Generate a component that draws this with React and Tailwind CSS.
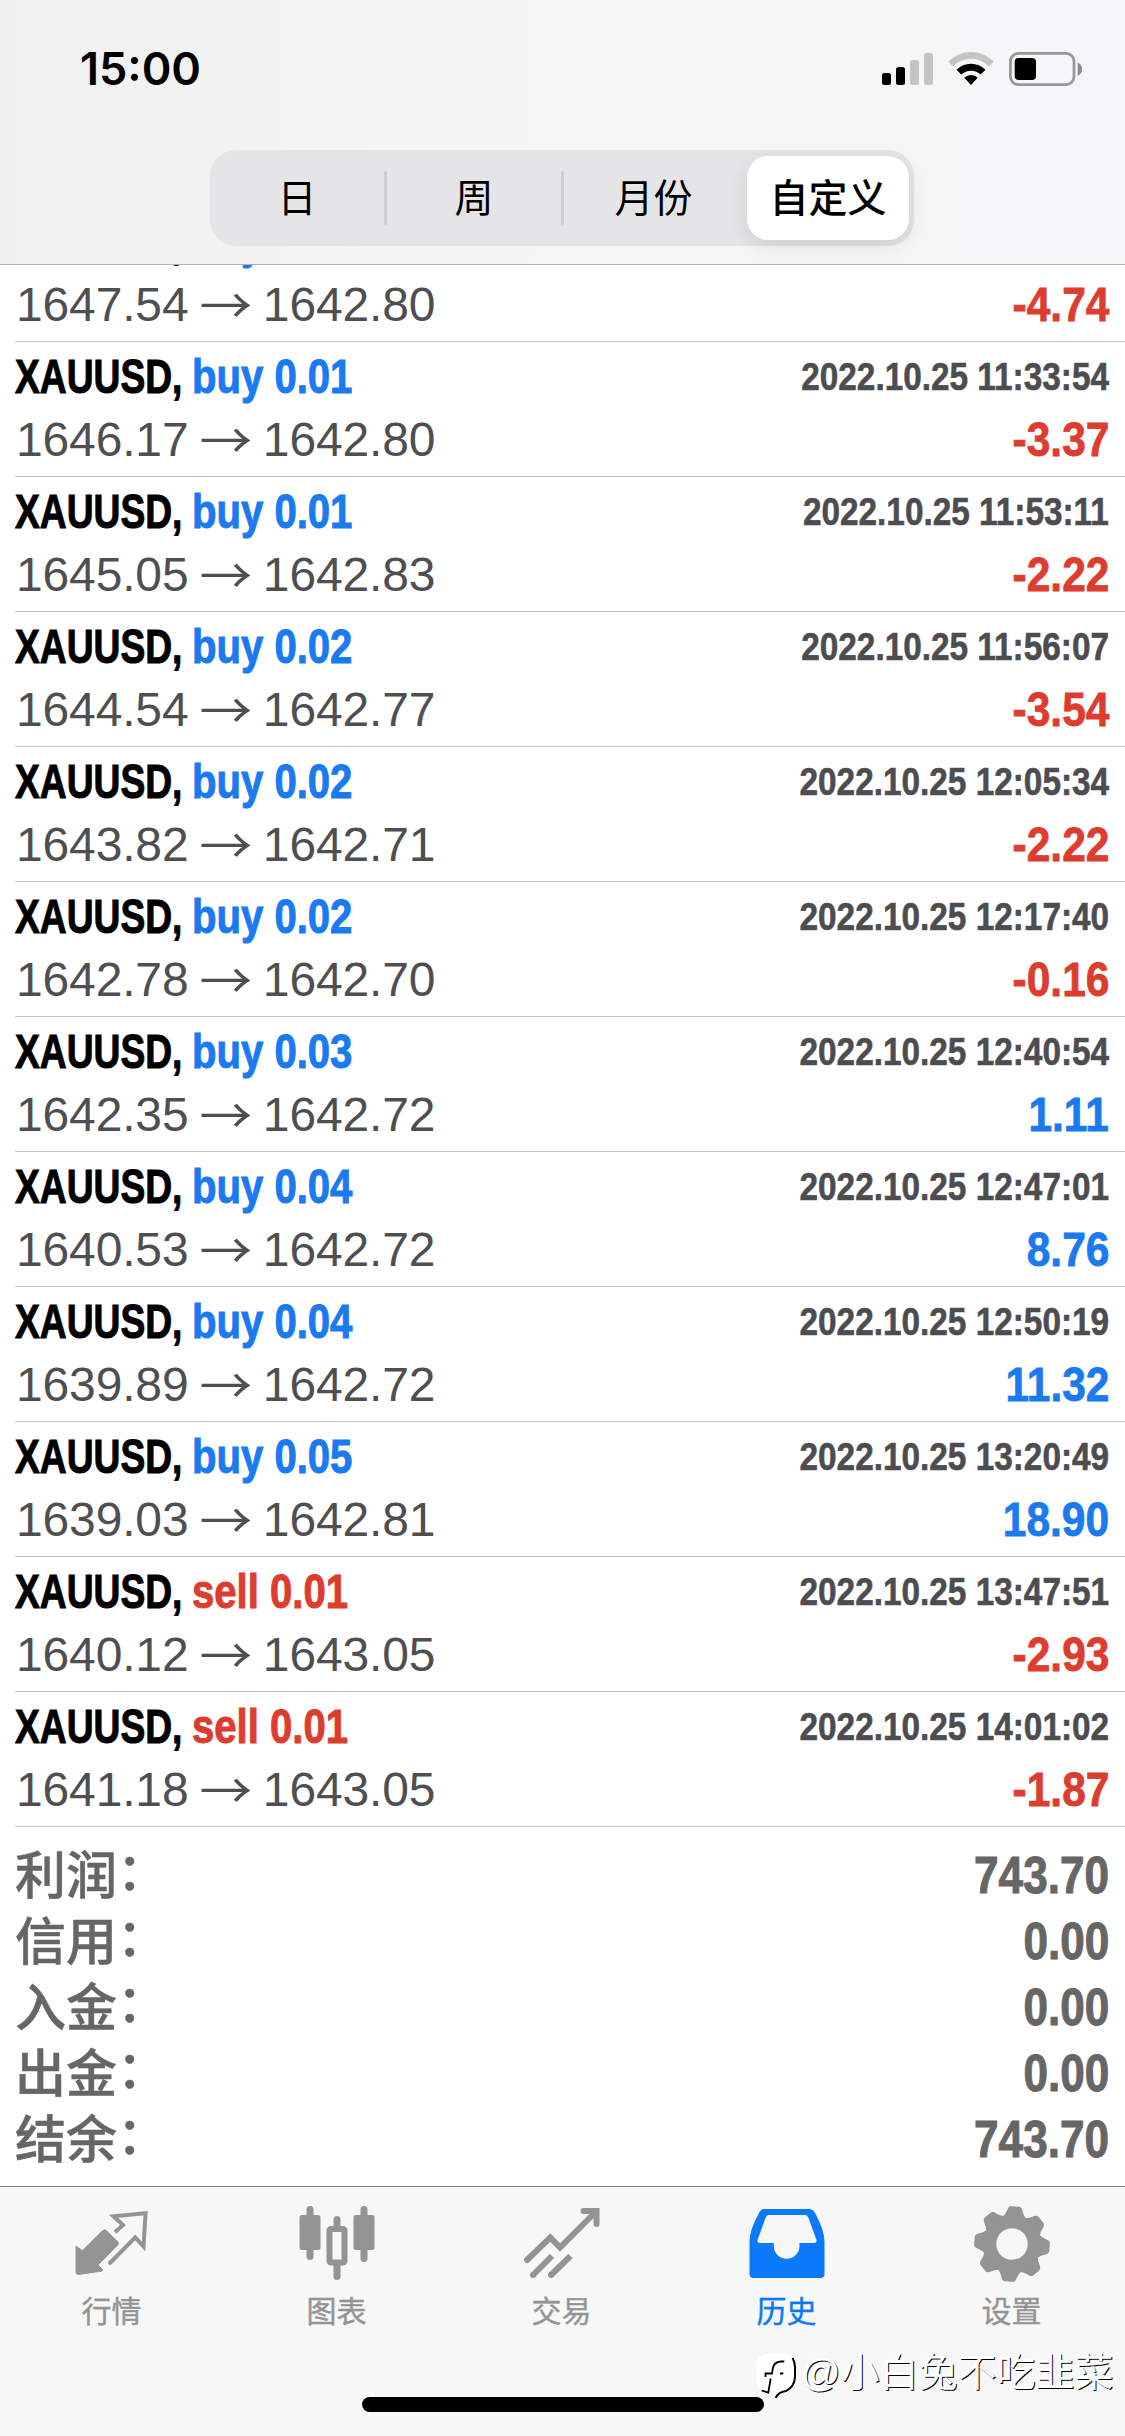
const deals = [
  { side: "buy", volume: "0.01", open: "1647.54", close: "1642.80", time: "2022.10.25 11:20:18", profit: "-4.74" },
  { side: "buy", volume: "0.01", open: "1646.17", close: "1642.80", time: "2022.10.25 11:33:54", profit: "-3.37" },
  { side: "buy", volume: "0.01", open: "1645.05", close: "1642.83", time: "2022.10.25 11:53:11", profit: "-2.22" },
  { side: "buy", volume: "0.02", open: "1644.54", close: "1642.77", time: "2022.10.25 11:56:07", profit: "-3.54" },
  { side: "buy", volume: "0.02", open: "1643.82", close: "1642.71", time: "2022.10.25 12:05:34", profit: "-2.22" },
  { side: "buy", volume: "0.02", open: "1642.78", close: "1642.70", time: "2022.10.25 12:17:40", profit: "-0.16" },
  { side: "buy", volume: "0.03", open: "1642.35", close: "1642.72", time: "2022.10.25 12:40:54", profit: "1.11" },
  { side: "buy", volume: "0.04", open: "1640.53", close: "1642.72", time: "2022.10.25 12:47:01", profit: "8.76" },
  { side: "buy", volume: "0.04", open: "1639.89", close: "1642.72", time: "2022.10.25 12:50:19", profit: "11.32" },
  { side: "buy", volume: "0.05", open: "1639.03", close: "1642.81", time: "2022.10.25 13:20:49", profit: "18.90" },
  { side: "sell", volume: "0.01", open: "1640.12", close: "1643.05", time: "2022.10.25 13:47:51", profit: "-2.93" },
  { side: "sell", volume: "0.01", open: "1641.18", close: "1643.05", time: "2022.10.25 14:01:02", profit: "-1.87" },
];

const totals = [
  { label: "利润", value: "743.70" },
  { label: "信用", value: "0.00" },
  { label: "入金", value: "0.00" },
  { label: "出金", value: "0.00" },
  { label: "结余", value: "743.70" },
];

function StatusIcons() {
  return (
    <svg width="202" height="36" viewBox="0 0 202 36">
      {/* signal */}
      <rect x="0" y="22" width="9" height="12" rx="2.5" fill="#000" />
      <rect x="14" y="16" width="9" height="18" rx="2.5" fill="#000" />
      <rect x="28" y="9" width="9" height="25" rx="2.5" fill="#c4c4c5" />
      <rect x="42" y="2" width="9" height="32" rx="2.5" fill="#c4c4c5" />
      {/* wifi */}
      <path d="M66.3 10.5 A32 32 0 0 1 111.7 10.5 L107 15.3 A25.5 25.5 0 0 0 71 15.3 Z" fill="#c4c4c5" />
      <path d="M74.5 18.7 A20.5 20.5 0 0 1 103.5 18.7 L98.7 23.6 A14 14 0 0 0 79.3 23.6 Z" fill="#000" />
      <path d="M82.3 26.8 A9.3 9.3 0 0 1 95.7 26.8 L89 34 Z" fill="#000" />
      {/* battery */}
      <rect x="128.4" y="2.4" width="63.6" height="31.2" rx="8" fill="none" stroke="#98989a" strokeWidth="2.8" />
      <rect x="132.7" y="7" width="21.3" height="22" rx="4" fill="#000" />
      <path d="M195.7 11.7 C201.5 13.5 201.5 22.9 195.7 24.7 Z" fill="#8b8b8d" />
    </svg>
  );
}

function Segment({ children, className }) {
  return <div className={`flex items-center justify-center h-[84px] pt-[3px] ${className}`}>{children}</div>;
}

function Header() {
  return (
    <header className="relative z-10 h-[265px] border-b border-[#b3b3b6] bg-linear-to-r from-[#f0f0f1] via-[#f7f6f6] to-[#f5f6f8]">
      <div className="flex justify-between h-[150px] pt-[45px] pl-20 pr-[41px]">
        <span className="font-['Inter'] font-semibold text-[45px] leading-[48px]">15:00</span>
        <div className="pt-[6px]">
          <StatusIcons />
        </div>
      </div>
      <div className="flex items-center w-[704px] h-24 ml-[210px] pl-1.5 pr-[5px] rounded-[26px] bg-[#e5e5e7] text-[39px]">
        <Segment className="w-[168px] pr-1.5">日</Segment>
        <div className="w-[3px] h-[54px] rounded-full bg-[#cdcdd0]" />
        <Segment className="w-[174px]">周</Segment>
        <div className="w-[3px] h-[54px] rounded-full bg-[#cdcdd0]" />
        <Segment className="w-[183px] pr-1">月份</Segment>
        <Segment className="w-[162px] rounded-[21px] bg-white font-medium shadow-[0_6px_20px_rgba(0,0,0,0.1)]">自定义</Segment>
      </div>
    </header>
  );
}

function DealRow({ deal }) {
  const sideColor = deal.side === "buy" ? "text-[#1a7af0]" : "text-[#dd3c2f]";
  const profitColor = deal.profit.startsWith("-") ? "text-[#dd3c2f]" : "text-[#1a7af0]";

  return (
    <div className="h-[135px] ml-[15px] pr-4 pt-[7px] border-b border-[#c3c3c5] whitespace-nowrap">
      <div className="flex justify-between h-[63px] font-bold text-[48px] leading-[56px] [-webkit-text-stroke:1px_currentColor]">
        <div className="flex">
          <div className="w-[177px] text-black">
            <span className="inline-block origin-left scale-x-[0.775]">XAUUSD,</span>
          </div>
          <span className={`inline-block origin-left scale-x-[0.835] ${sideColor}`}>
            {deal.side} {deal.volume}
          </span>
        </div>
        <span className="inline-block origin-right scale-x-[0.855] text-[39px] leading-[55px] text-[#4d4d51] [-webkit-text-stroke:0.6px_currentColor]">
          {deal.time}
        </span>
      </div>
      <div className="flex justify-between text-[48px] leading-[56px]">
        <div className="flex ml-px tracking-[-0.15px] text-[#4f4f52]">
          <span>{deal.open}&nbsp;</span>
          <span className="w-12 h-14 font-['Noto_Sans_CJK_SC'] scale-x-110 -translate-y-[3px]">→</span>
          <span>&nbsp;{deal.close}</span>
        </div>
        <span className={`inline-block origin-right scale-x-[0.885] font-bold [-webkit-text-stroke:0.8px_currentColor] ${profitColor}`}>
          {deal.profit}
        </span>
      </div>
    </div>
  );
}

function Totals() {
  return (
    <div className="h-[359px] pt-[17px] pl-[15px] pr-4 text-[#666]">
      {totals.map((t) => (
        <div key={t.label} className="flex justify-between h-[66px] text-[51px] leading-[66px]">
          <span className="flex font-medium [-webkit-text-stroke:0.5px_currentColor]">
            {t.label}
            <span className="-translate-y-[4px]">：</span>
          </span>
          <span className="inline-block origin-right scale-x-[0.865] leading-[64px] font-bold [-webkit-text-stroke:1px_currentColor]">{t.value}</span>
        </div>
      ))}
    </div>
  );
}

function QuotesIcon() {
  return (
    <svg width="76" height="76" viewBox="0 0 76 76" fill="currentColor">
      <path d="M2 40.2 L8.5 44.7 L28.5 24.7 Q30.5 23 32.5 24.7 L43.8 36 Q45.2 37.5 43.8 39 L24 59 L28.6 63.6 Q28.8 64.5 28 65 L4.5 68.5 Q2 68.7 2 66 Z" stroke="currentColor" strokeLinejoin="round" />
      <path d="M41 26.3 L49 19 L39.5 10.3 L71.6 7.3 L69.5 40.5 L61.2 31.3 L36 57" fill="none" stroke="currentColor" strokeWidth="4" />
      <circle cx="36" cy="57" r="2" />
    </svg>
  );
}

function ChartIcon() {
  return (
    <svg width="76" height="76" viewBox="0 0 76 76" fill="currentColor">
      <rect x="7.5" y="0" width="7" height="54" rx="3.5" />
      <rect x="0.5" y="9" width="21" height="35" rx="2.5" />
      <rect x="34.5" y="10" width="7" height="14" rx="3.5" />
      <rect x="34.5" y="55" width="7" height="19" rx="3.5" />
      <rect x="30.5" y="23" width="15" height="33.5" rx="1.5" fill="none" stroke="currentColor" strokeWidth="6" />
      <rect x="61.5" y="0" width="7" height="56" rx="3.5" />
      <rect x="54.5" y="9" width="21" height="35" rx="2.5" />
    </svg>
  );
}

function TradeIcon() {
  return (
    <svg width="76" height="76" viewBox="0 0 76 76" fill="none" stroke="currentColor" strokeWidth="6">
      <path d="M3 54 L26.3 31.5 L36 41.5 L72 5.5" strokeLinecap="round" />
      <path d="M59.5 5 H72.5 V18" strokeLinecap="round" />
      <path d="M9 69 L28 50" />
      <path d="M27 69 L46.5 50" />
      <circle cx="9" cy="69" r="3" fill="currentColor" stroke="none" />
      <circle cx="27" cy="69" r="3" fill="currentColor" stroke="none" />
    </svg>
  );
}

function HistoryIcon() {
  return (
    <svg width="76" height="76" viewBox="0 0 76 76" fill="currentColor">
      <path
        fillRule="evenodd"
        d="M15 3 H60 Q64 3 66 7 Q75.5 24 75.5 36 V68 Q75.5 72 71.5 72 H4.5 Q0.5 72 0.5 68 V36 Q0.5 24 10 7 Q12 3 15 3 Z M20 9 Q17.5 9 16.5 12 L8.5 34 Q8 37 10.5 37 H24.8 V40 A12.85 12.85 0 0 0 50.5 40 V37 H65.5 Q68 37 67.5 34 L59.5 12 Q58.5 9 56 9 Z"
      />
    </svg>
  );
}

function SettingsIcon() {
  return (
    <svg width="76" height="76" viewBox="0 0 76 76" fill="currentColor">
      <g transform="rotate(5 38 38)">
        {[0, 45, 90, 135, 180, 225, 270, 315].map((a) => (
          <path
            key={a}
            transform={`rotate(${a} 38 38)`}
            d="M26 12 Q29 9 30.5 4 Q31.5 0.3 34.5 0.3 H41.5 Q44.5 0.3 45.5 4 Q47 9 50 12 L46 18 H30 Z"
          />
        ))}
      </g>
      <circle cx="38" cy="38" r="22.5" fill="none" stroke="currentColor" strokeWidth="13.5" />
    </svg>
  );
}

const tabs = [
  { label: "行情", Icon: QuotesIcon },
  { label: "图表", Icon: ChartIcon },
  { label: "交易", Icon: TradeIcon },
  { label: "历史", Icon: HistoryIcon, active: true },
  { label: "设置", Icon: SettingsIcon },
];

function TabBar() {
  return (
    <nav className="h-[250px] border-t border-[#858585] bg-[#f7f7f7]">
      <div className="flex h-[210px] -ml-px">
        {tabs.map(({ label, Icon, active }) => (
          <div
            key={label}
            className={`flex flex-col items-center w-[225px] pt-[19px] ${active ? "text-[#0a79fb]" : "text-[#949494]"}`}
          >
            <Icon />
            <span className="mt-2 text-[30px] leading-[44px] [-webkit-text-stroke:0.4px_currentColor]">{label}</span>
          </div>
        ))}
      </div>
      <div className="w-[402px] h-[15px] mx-auto rounded-full bg-black" />
    </nav>
  );
}

function Watermark() {
  return (
    <div className="absolute left-[756px] top-[2352px] flex items-start">
      <svg width="45" height="48" viewBox="0 0 45 48">
        <path d="M13 1.5 H27 Q39 2 39 14 V26 Q39 37 28 40 Q22 41 20 46 L18 41 H13 Q0.5 40 0.5 28 V14 Q0.5 2 13 1.5 Z" fill="#fff" />
        <path d="M36.5 6 Q39 10 39 15 V25 Q38.5 35 30 39 Q22 40 19.7 46" fill="none" stroke="#000" strokeWidth="2" />
        <path d="M28.3 9.5 H25 Q17.5 10 16.7 17 L16 21.5 H9.5 V25 M14.7 26.5 L12.3 40.5 L5.7 38.5 M24 21.5 H27.3" fill="none" stroke="#000" strokeWidth="1.8" />
      </svg>
      <span className="-mt-[3px] text-[39px] leading-[48px] text-white whitespace-nowrap [text-shadow:1px_1px_0_#000]">@小白兔不吃韭菜</span>
    </div>
  );
}

export default function App() {
  return (
    <div className="relative w-[1125px] h-[2436px] overflow-hidden bg-white font-['Liberation_Sans','Noto_Sans_CJK_SC',sans-serif]">
      <Header />
      {/* the list is scrolled, so the first deal starts behind the header */}
      <main className="-mt-[58px]">
        {deals.map((deal) => (
          <DealRow key={deal.time} deal={deal} />
        ))}
        <Totals />
      </main>
      <TabBar />
      <Watermark />
    </div>
  );
}
